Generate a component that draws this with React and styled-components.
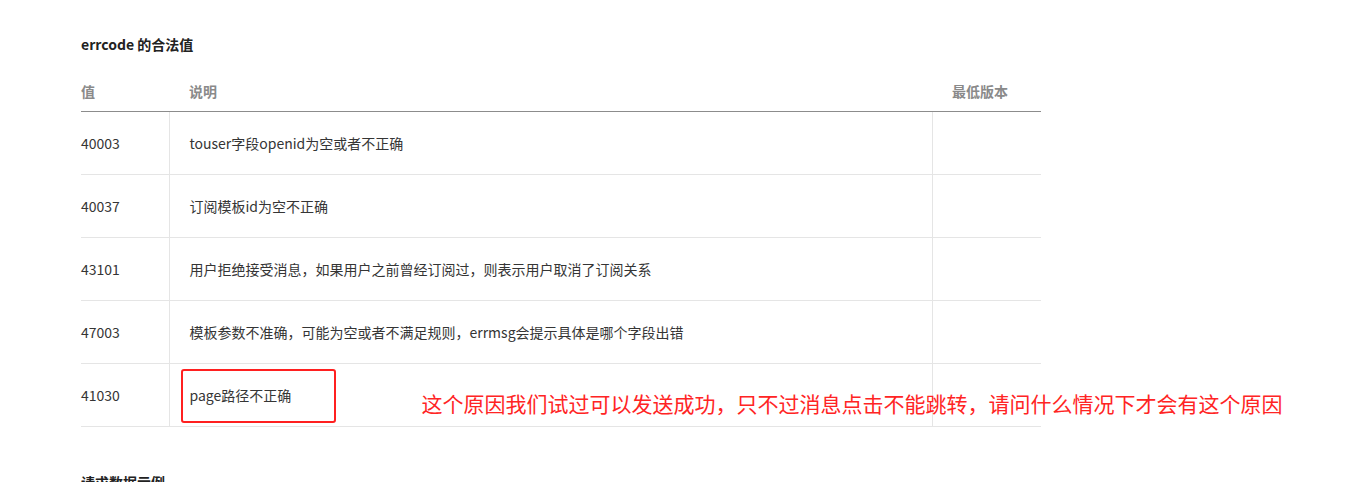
import React from 'react'
import styled, { createGlobalStyle } from 'styled-components'

const GlobalStyle = createGlobalStyle`
  body {
    margin: 0;
    background: #fff;
    font-family: "Noto Sans CJK SC", "Liberation Sans", sans-serif;
    color: #353535;
  }
`

const Page = styled.div`
  padding: 34px 0 0 81px;
  width: 960px;
`

const Heading = styled.h3`
  margin: 0;
  font-size: 14px;
  line-height: 20px;
  font-weight: 700;
  color: #222;
`

const Table = styled.table`
  width: 960px;
  margin-top: 16px;
  border-collapse: collapse;
  table-layout: fixed;
  font-size: 14px;
`

const HeadCell = styled.th`
  text-align: left;
  font-weight: 700;
  color: #8a8a8a;
  height: 41px;
  padding: 0 0 0 ${p => (p.$first ? 0 : 20)}px;
  border-bottom: 1px solid #8c8c8c;
  vertical-align: middle;
`

const Row = styled.tr`
  border-bottom: 1px solid #e5e5e5;
`

const Cell = styled.td`
  height: 62px;
  padding: 0 0 0 ${p => (p.$first ? 0 : 20)}px;
  border-left: ${p => (p.$first ? 'none' : '1px solid #e5e5e5')};
  vertical-align: middle;
  color: #353535;
  position: relative;
`

const Marked = styled.span`
  position: relative;
  &::before {
    content: '';
    position: absolute;
    left: -9px;
    top: -16px;
    width: 151px;
    height: 50px;
    border: 2px solid #ff2020;
    border-radius: 3px;
  }
`

const Note = styled.span`
  position: absolute;
  left: 252px;
  top: 26px;
  white-space: nowrap;
  font-size: 21px;
  line-height: 26px;
  color: #ff2424;
  z-index: 1;
`

const SubHeading = styled(Heading)`
  margin-top: 45px;
`

const rows = [
  ['40003', 'touser字段openid为空或者不正确'],
  ['40037', '订阅模板id为空不正确'],
  ['43101', '用户拒绝接受消息，如果用户之前曾经订阅过，则表示用户取消了订阅关系'],
  ['47003', '模板参数不准确，可能为空或者不满足规则，errmsg会提示具体是哪个字段出错'],
]

export default function App() {
  return (
    <Page>
      <GlobalStyle />
      <Heading>errcode 的合法值</Heading>
      <Table>
        <colgroup>
          <col style={{ width: 88 }} />
          <col style={{ width: 763 }} />
          <col style={{ width: 109 }} />
        </colgroup>
        <thead>
          <tr>
            <HeadCell $first>值</HeadCell>
            <HeadCell>说明</HeadCell>
            <HeadCell>最低版本</HeadCell>
          </tr>
        </thead>
        <tbody>
          {rows.map(([code, desc]) => (
            <Row key={code}>
              <Cell $first>{code}</Cell>
              <Cell>{desc}</Cell>
              <Cell />
            </Row>
          ))}
          <Row>
            <Cell $first>41030</Cell>
            <Cell>
              <Marked>page路径不正确</Marked>
              <Note>这个原因我们试过可以发送成功，只不过消息点击不能跳转，请问什么情况下才会有这个原因</Note>
            </Cell>
            <Cell />
          </Row>
        </tbody>
      </Table>
      <SubHeading>请求数据示例</SubHeading>
    </Page>
  )
}
